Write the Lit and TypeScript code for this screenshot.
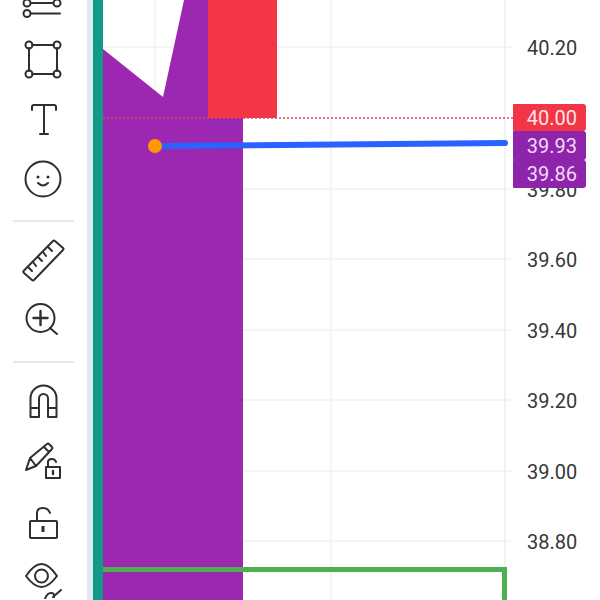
import { LitElement, html, css, svg } from "lit";
import { customElement } from "lit/decorators.js";

const ICON = (w: number, h: number, vy: number, body: unknown) => html`<svg class="ic" width=${w} height=${h} viewBox="0 ${vy} ${w} ${h}">${body}</svg>`;

// Each icon is drawn in page x coords (0-87), with viewBox y offset so the row's flow position lines up.
const rows = [
  { h: 24, vy: 0, body: svg`<circle cx="27" cy="3" r="3.500"/><circle cx="57" cy="3" r="3.500"/><path d="M31 3H53"/><circle cx="27" cy="13.500" r="3.500"/><path d="M31 13.500H60"/>` },
  { h: 65, vy: 24, body: svg`<path d="M32 45H54M29 48V71M57 48V71M32 74H54"/><circle cx="29" cy="45" r="3.500"/><circle cx="57" cy="45" r="3.500"/><circle cx="29" cy="74" r="3.500"/><circle cx="57" cy="74" r="3.500"/>` },
  { h: 61, vy: 89, body: svg`<path d="M32 110V107Q32 105 34 105H54Q56 105 56 107V110M44 105V134M40 134H48"/>` },
  { h: 61, vy: 150, body: svg`<circle cx="43" cy="179" r="17.500"/><circle class="f" cx="38" cy="177" r="1.500"/><circle class="f" cx="48" cy="177" r="1.500"/><path d="M38 183Q43 188 48 183"/>` },
];
const rows2 = [
  { h: 70, vy: 230, body: svg`<path d="M23.500 272L53 242Q54 241 55 242L63 249Q64 250 63 251L34 281Q33 282 32 281L24 274Q23 273 23.500 272Z"/><path d="M28 268L32 272M33 263L36 267M38 258L42 262M43 253L46 257M48 248L52 252"/>` },
  { h: 41, vy: 300, body: svg`<circle cx="40.500" cy="319" r="14"/><path class="t" d="M40.500 312V326M33.500 319H47.500"/><path d="M50 329L57 335"/>` },
];
const rows3 = [
  { h: 65, vy: 372, body: svg`<path d="M30.500 418V399.500A13 13 0 0 1 56.500 399.500V418H48V399.500A4.500 4.500 0 0 0 39 399.500V418ZM30.500 409H39M48 409H56.500"/>` },
  { h: 52, vy: 437, body: svg`<path d="M26 471L30 459L47 445Q48 444 49 445L52 448Q53 449 52 450L36 467ZM30 459L36 467M44 448L49 453"/><path d="M46 468H60V479H46ZM48 468V463Q48 460 52 460Q55 460 56 463"/><path class="t" d="M53 472V475"/>` },
  { h: 60, vy: 489, body: svg`<path d="M31 522H56Q57 522 57 523V538Q57 539 56 539H31Q30 539 30 538V523Q30 522 31 522ZM37 522V514Q37 509 43 509Q48 509 50 514"/><path class="k" d="M43 527V533"/>` },
  { h: 51, vy: 549, body: svg`<path d="M26 577Q34 565 41.500 565Q49 565 57 577Q49 588 41.500 588Q34 588 26 577Z"/><circle cx="41.500" cy="577" r="6.500"/><path d="M45 600Q47 594 51 594Q55 594 54 598M53 598L61 591"/>` },
];

const gridY = [47, 189, 259, 330, 400, 471, 541];
const axis = [
  { y: 48, t: "40.20" },
  { y: 190, t: "39.80" },
  { y: 260, t: "39.60" },
  { y: 331, t: "39.40" },
  { y: 401, t: "39.20" },
  { y: 472, t: "39.00" },
  { y: 542, t: "38.80" },
];
const tags = [
  { t: "40.00", cls: "red", h: 27 },
  { t: "39.93", cls: "pur", h: 29 },
  { t: "39.86", cls: "pur", h: 28 },
];

@customElement("app-root")
export class AppRoot extends LitElement {
  static styles = css`
    :host { display: block; width: 600px; height: 600px; overflow: hidden; background: #fff; font-family: Roboto, "Liberation Sans", sans-serif; }
    .page { display: flex; width: 600px; height: 600px; }
    .tools { width: 87px; flex: none; display: flex; flex-direction: column; }
    .ic { display: block; fill: none; stroke: #2e2e33; stroke-width: 2; stroke-linecap: round; stroke-linejoin: round; }
    .ic .f { fill: #2e2e33; stroke: none; }
    .ic .t { stroke-width: 2.400; }
    .ic .k { stroke-width: 3; stroke-linecap: butt; }
    .sep { height: 2px; margin: 9px 13px 0; background: #e8e8ea; flex: none; }
    .gap-a { height: 7px; flex: none; }
    .sep-b { margin-top: 21px; }
    .gap-b { height: 8px; flex: none; }
    .strip { width: 6px; flex: none; background: #dfeaf3; }
    .teal { width: 10px; flex: none; background: #129a86; }
    .chart { position: relative; z-index: 1; width: 402px; height: 600px; flex: none; display: block; overflow: visible; }
    .axis { position: relative; flex: 1; }
    .lab { position: absolute; left: 22px; font-size: 20px; line-height: 22px; color: #37373c; transform: translateY(-50%); }
    .tags { position: absolute; left: 8px; top: 104px; width: 73px; display: flex; flex-direction: column; z-index: 2; }
    .tag { display: flex; align-items: center; justify-content: flex-end; padding-right: 9px; font-size: 20px; border-radius: 1px 3px 3px 1px; }
    .red { background: #f23645; color: #fde4e6; }
    .pur { background: #8e24aa; color: #f3d9fa; }
  `;

  private icons(list: { h: number; vy: number; body: unknown }[]) {
    return list.map((r) => ICON(87, r.h, r.vy, r.body));
  }

  render() {
    return html`<div class="page">
      <div class="tools">
        ${this.icons(rows)}
        <div class="sep"></div>
        <div class="gap-a"></div>
        ${this.icons(rows2)}
        <div class="sep sep-b"></div>
        <div class="gap-b"></div>
        ${this.icons(rows3)}
      </div>
      <div class="strip"></div>
      <div class="teal"></div>
      <svg class="chart" viewBox="103 0 402 600">
        ${gridY.map((y) => svg`<line x1="103" x2="512" y1=${y} y2=${y} stroke="#f0f2f5" stroke-width="1.500"/>`)}
        <line x1="155" x2="155" y1="0" y2="600" stroke="#f0f2f5" stroke-width="1.500"/>
        <line x1="331" x2="331" y1="0" y2="600" stroke="#f0f2f5" stroke-width="1.500"/>
        <line x1="505" x2="505" y1="0" y2="600" stroke="#eceef1" stroke-width="1.500"/>
        <polygon points="103,49 163,97 184,0 243,0 243,600 103,600" fill="#9c27b0"/>
        <rect x="208" y="0" width="69" height="118" fill="#f23645"/>
        <line x1="103" x2="513" y1="118" y2="118" stroke="#e2455e" stroke-width="1.500" stroke-dasharray="2 2"/>
        <path d="M155 146L505 143" stroke="#2962ff" stroke-width="6" stroke-linecap="round"/>
        <circle cx="155" cy="146" r="7" fill="#ff9800"/>
        <path d="M103 569.500H504.500V600" fill="none" stroke="#4caf50" stroke-width="5"/>
      </svg>
      <div class="axis">
        ${axis.map((a) => html`<div class="lab" style="top:${a.y}px">${a.t}</div>`)}
        <div class="tags">
          ${tags.map((t) => html`<div class="tag ${t.cls}" style="height:${t.h}px">${t.t}</div>`)}
        </div>
      </div>
    </div>`;
  }
}
